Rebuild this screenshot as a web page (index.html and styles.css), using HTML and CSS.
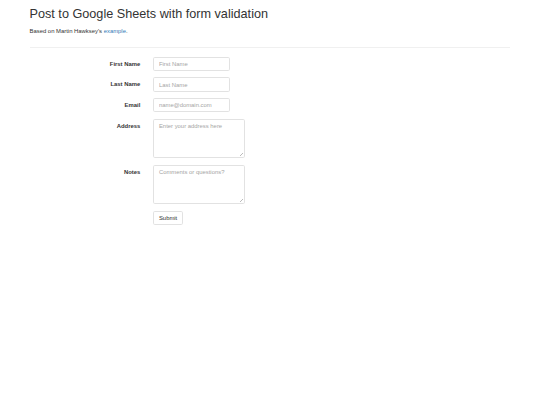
FILE: index.html
```html
<!DOCTYPE html>
<html lang="en">
<head>
    <meta charset="UTF-8">
    <meta name="viewport" content="width=device-width, initial-scale=1.0">
    <title>Post to Google Sheets with form validation</title>
    <link rel="stylesheet" href="styles.css">
</head>
<body>
    <div class="container">
        <h2>Post to Google Sheets with form validation</h2>
        <p>Based on Martin Hawksey's <a href="#">example</a>.</p>
        <hr>
        <form class="form-horizontal" id="foo" onsubmit="return false">
            <div class="form-group">
                <label class="control-label" for="firstname">First Name</label>
                <div class="field">
                    <input type="text" class="form-control" id="firstname" name="firstname" placeholder="First Name">
                </div>
            </div>
            <div class="form-group">
                <label class="control-label" for="lastname">Last Name</label>
                <div class="field">
                    <input type="text" class="form-control" id="lastname" name="lastname" placeholder="Last Name">
                </div>
            </div>
            <div class="form-group">
                <label class="control-label" for="email">Email</label>
                <div class="field">
                    <input type="email" class="form-control" id="email" name="email" placeholder="name@domain.com">
                </div>
            </div>
            <div class="form-group">
                <label class="control-label" for="address">Address</label>
                <div class="field">
                    <textarea class="form-control" id="address" name="address" placeholder="Enter your address here"></textarea>
                </div>
            </div>
            <div class="form-group">
                <label class="control-label" for="notes">Notes</label>
                <div class="field">
                    <textarea class="form-control" id="notes" name="notes" placeholder="Comments or questions?"></textarea>
                </div>
            </div>
            <div class="form-group">
                <div class="field offset">
                    <button type="submit" class="btn">Submit</button>
                </div>
            </div>
        </form>
    </div>
</body>
</html>
```

FILE: styles.css
```css
* {
    box-sizing: border-box;
}
body {
    margin: 0;
    font-family: 'Liberation Sans', Arial, sans-serif;
    font-size: 5.9px;
    line-height: 8.44px;
    color: #333;
    background: #fff;
}
.container {
    width: 493.6px;
    margin: 0 auto;
    padding: 0 6.33px;
}
h2 {
    font-size: 12.66px;
    font-weight: normal;
    line-height: 13.92px;
    margin: 8.44px 0 4.22px;
}
p {
    margin: 0 0 4.22px;
}
a {
    color: #337ab7;
    text-decoration: none;
}
hr {
    margin: 12.3px 0 8.44px;
    border: 0;
    border-top: 1px solid #f0f0f0;
}
.form-group {
    display: flex;
    margin: 0 -6.33px 6.33px;
}
.control-label {
    width: 25%;
    padding: 2.95px 6.33px 0;
    text-align: right;
    font-weight: bold;
}
.field {
    padding: 0 6.33px;
}
.offset {
    margin-left: 25%;
}
.form-control {
    display: block;
    width: 77.2px;
    height: 14.34px;
    padding: 2.5px 5px;
    font-family: inherit;
    font-size: 5.9px;
    line-height: 8.44px;
    color: #555;
    background: #fff;
    border: 1px solid #e2e2e2;
    border-radius: 1.7px;
    outline: none;
}
.form-control::placeholder {
    color: #a5a5a5;
}
textarea.form-control {
    width: 92px;
    height: 39.66px;
    resize: none;
    /* small resize grip like the original */
    background:
        linear-gradient(135deg, transparent 45%, #bbb 45%, #bbb 55%, transparent 55%) right 1px bottom 1px / 3px 3px no-repeat,
        #fff;
}
.btn {
    height: 14.34px;
    padding: 2.5px 5px;
    font-family: inherit;
    font-size: 5.9px;
    line-height: 8.44px;
    color: #333;
    background: #fff;
    border: 1px solid #e2e2e2;
    border-radius: 1.7px;
    cursor: pointer;
}
```
